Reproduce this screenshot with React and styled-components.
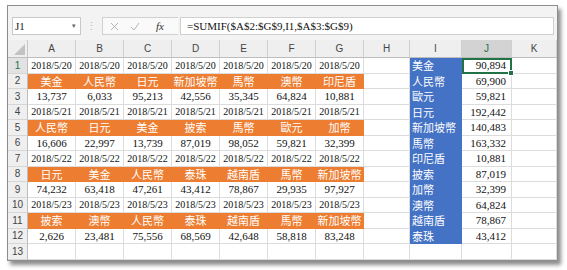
import React from 'react'
import styled, { createGlobalStyle } from 'styled-components'

const GlobalStyle = createGlobalStyle`
  html, body {
    margin: 0;
    padding: 0;
    background: #ffffff;
  }
`

const SERIF = `'Liberation Serif', 'Noto Sans CJK TC', serif`
const SANS = `'Liberation Sans', 'Noto Sans', sans-serif`
const GRID = '#dcdcdc'
const ORANGE = '#ed7d31'
const BLUE = '#4472c4'
const GREEN = '#217346'

const Page = styled.div`
  width: 567px;
  height: 270px;
  padding: 5px 0 0 7px;
  box-sizing: border-box;
`

const Window = styled.div`
  width: 551px;
  height: 256px;
  box-sizing: border-box;
  border: 1px solid #8e8e8e;
  background: #f3f3f3;
  box-shadow: 3px 4px 4px rgba(0, 0, 0, 0.45);
  display: flex;
  flex-direction: column;
  overflow: hidden;
`

const FormulaRow = styled.div`
  margin-top: 11px;
  height: 18px;
  display: flex;
  padding: 0 3px 0 4px;
`

const NameBox = styled.div`
  width: 69px;
  box-sizing: border-box;
  border: 1px solid #c8c8c8;
  background: #fff;
  display: flex;
  align-items: center;
  justify-content: space-between;
  padding: 0 4px 0 2px;
  font-family: ${SERIF};
  font-size: 11px;
  color: #222;

  .arrow {
    font-family: ${SANS};
    font-size: 7px;
    color: #666;
  }
`

const Grip = styled.div`
  width: 21px;
  display: flex;
  align-items: center;
  justify-content: center;
  color: #b8b8b8;
  font-family: ${SANS};
  font-size: 11px;
`

const ActionBox = styled.div`
  width: 76px;
  box-sizing: border-box;
  border: 1px solid #d0d0d0;
  border-right: none;
  background: #fafafa;
  display: flex;
  align-items: center;
  padding-left: 7px;
  gap: 11px;

  .fx {
    margin-left: 5px;
    font-family: ${SERIF};
    font-style: italic;
    font-size: 11px;
    color: #333;
  }
`

const FormulaInput = styled.div`
  flex: 1;
  margin-left: 2px;
  box-sizing: border-box;
  border: 1px solid #d0d0d0;
  background: #fff;
  display: flex;
  align-items: center;
  padding-left: 6px;
  font-family: ${SERIF};
  font-size: 11px;
  color: #111;
`

const Sheet = styled.div`
  margin-top: 5px;
  display: grid;
  grid-template-columns: 20px repeat(7, 48px) 46px 52px 50px 1fr;
  grid-template-rows: 18px repeat(13, 15.5px);
  background: #fff;
`

const Corner = styled.div`
  position: relative;
  background: #efefef;
  border-right: 1px solid #c8c8c8;
  border-bottom: 1px solid #bdbdbd;

  &::after {
    content: '';
    position: absolute;
    right: 2px;
    bottom: 2px;
    border-left: 11px solid transparent;
    border-bottom: 11px solid #c2c2c2;
  }
`

const ColHead = styled.div`
  background: ${p => (p.$active ? '#d3d3d3' : '#efefef')};
  color: ${p => (p.$active ? GREEN : '#444')};
  border-right: 1px solid #cfcfcf;
  border-bottom: 1px solid #bdbdbd;
  display: flex;
  align-items: center;
  justify-content: center;
  font-family: ${SANS};
  font-size: 10px;
`

const RowHead = styled.div`
  background: ${p => (p.$active ? '#e2e2e2' : '#efefef')};
  color: ${p => (p.$active ? GREEN : '#444')};
  border-right: 1px solid #bdbdbd;
  border-bottom: 1px solid #d6d6d6;
  display: flex;
  align-items: center;
  justify-content: center;
  font-family: ${SANS};
  font-size: 10px;
`

const fills = { orange: ORANGE, blue: BLUE }

const Cell = styled.div`
  position: relative;
  box-sizing: border-box;
  background: ${p => fills[p.$fill] || '#fff'};
  color: ${p => (p.$fill ? '#fff' : '#111')};
  border-right: 1px solid ${p => fills[p.$fill] || GRID};
  border-bottom: 1px solid ${p => fills[p.$fill] || GRID};
  display: flex;
  align-items: center;
  justify-content: ${p => p.$align || 'center'};
  padding: 0 ${p => (p.$align === 'flex-end' ? '5px' : '2px')};
  font-family: ${SERIF};
  font-size: ${p => (p.$small ? '10px' : '11px')};
  white-space: nowrap;
  overflow: hidden;

  ${p => p.$selected && `
    overflow: visible;
    outline: 2px solid ${GREEN};
    outline-offset: -2px;
    &::after {
      content: '';
      position: absolute;
      right: -3px;
      bottom: -3px;
      width: 4px;
      height: 4px;
      background: ${GREEN};
      border: 1px solid #fff;
      z-index: 2;
    }
  `}
`

const columns = ['A', 'B', 'C', 'D', 'E', 'F', 'G', 'H', 'I', 'J', 'K']

const blocks = [
  {
    date: '2018/5/20',
    names: ['美金', '人民幣', '日元', '新加坡幣', '馬幣', '澳幣', '印尼盾'],
    values: ['13,737', '6,033', '95,213', '42,556', '35,345', '64,824', '10,881'],
  },
  {
    date: '2018/5/21',
    names: ['人民幣', '日元', '美金', '披索', '馬幣', '歐元', '加幣'],
    values: ['16,606', '22,997', '13,739', '87,019', '98,052', '59,821', '32,399'],
  },
  {
    date: '2018/5/22',
    names: ['日元', '美金', '人民幣', '泰珠', '越南盾', '馬幣', '新加坡幣'],
    values: ['74,232', '63,418', '47,261', '43,412', '78,867', '29,935', '97,927'],
  },
  {
    date: '2018/5/23',
    names: ['披索', '澳幣', '人民幣', '泰珠', '越南盾', '馬幣', '新加坡幣'],
    values: ['2,626', '23,481', '75,556', '68,569', '42,648', '58,818', '83,248'],
  },
]

const totals = [
  ['美金', '90,894'],
  ['人民幣', '69,900'],
  ['歐元', '59,821'],
  ['日元', '192,442'],
  ['新加坡幣', '140,483'],
  ['馬幣', '163,332'],
  ['印尼盾', '10,881'],
  ['披索', '87,019'],
  ['加幣', '32,399'],
  ['澳幣', '64,824'],
  ['越南盾', '78,867'],
  ['泰珠', '43,412'],
]

// build the 13 sheet rows: date / names / values per block, then an empty one
const rows = []
blocks.forEach(b => {
  rows.push({ kind: 'date', cells: Array(7).fill(b.date) })
  rows.push({ kind: 'name', cells: b.names })
  rows.push({ kind: 'value', cells: b.values })
})
rows.push({ kind: 'empty', cells: Array(7).fill('') })

const CrossIcon = () => (
  <svg width='9' height='9' viewBox='0 0 9 9'>
    <path d='M1 1 L8 8 M8 1 L1 8' stroke='#b4b4b4' strokeWidth='1' fill='none' />
  </svg>
)

const CheckIcon = () => (
  <svg width='10' height='9' viewBox='0 0 10 9'>
    <path d='M1 5 L4 8 L9 1' stroke='#b4b4b4' strokeWidth='1' fill='none' />
  </svg>
)

const App = () => {
  return (
    <Page>
      <GlobalStyle />
      <Window>
        <FormulaRow>
          <NameBox>
            <span>J1</span>
            <span className='arrow'>▾</span>
          </NameBox>
          <Grip>⋮</Grip>
          <ActionBox>
            <CrossIcon />
            <CheckIcon />
            <span className='fx'>fx</span>
          </ActionBox>
          <FormulaInput>=SUMIF($A$2:$G$9,I1,$A$3:$G$9)</FormulaInput>
        </FormulaRow>

        <Sheet>
          <Corner />
          {columns.map(c => (
            <ColHead key={c} $active={c === 'J'}>{c}</ColHead>
          ))}

          {rows.map((row, i) => {
            const total = totals[i]
            return (
              <React.Fragment key={i}>
                <RowHead $active={i === 0}>{i + 1}</RowHead>
                {row.cells.map((text, j) => (
                  <Cell
                    key={j}
                    $fill={row.kind === 'name' ? 'orange' : undefined}
                    $small={row.kind === 'date'}
                  >
                    {text}
                  </Cell>
                ))}
                <Cell />
                <Cell $fill={total ? 'blue' : undefined} $align='flex-start'>
                  {total ? total[0] : ''}
                </Cell>
                <Cell $align='flex-end' $selected={i === 0}>
                  {total ? total[1] : ''}
                </Cell>
                <Cell />
              </React.Fragment>
            )
          })}
        </Sheet>
      </Window>
    </Page>
  )
}

export default App
